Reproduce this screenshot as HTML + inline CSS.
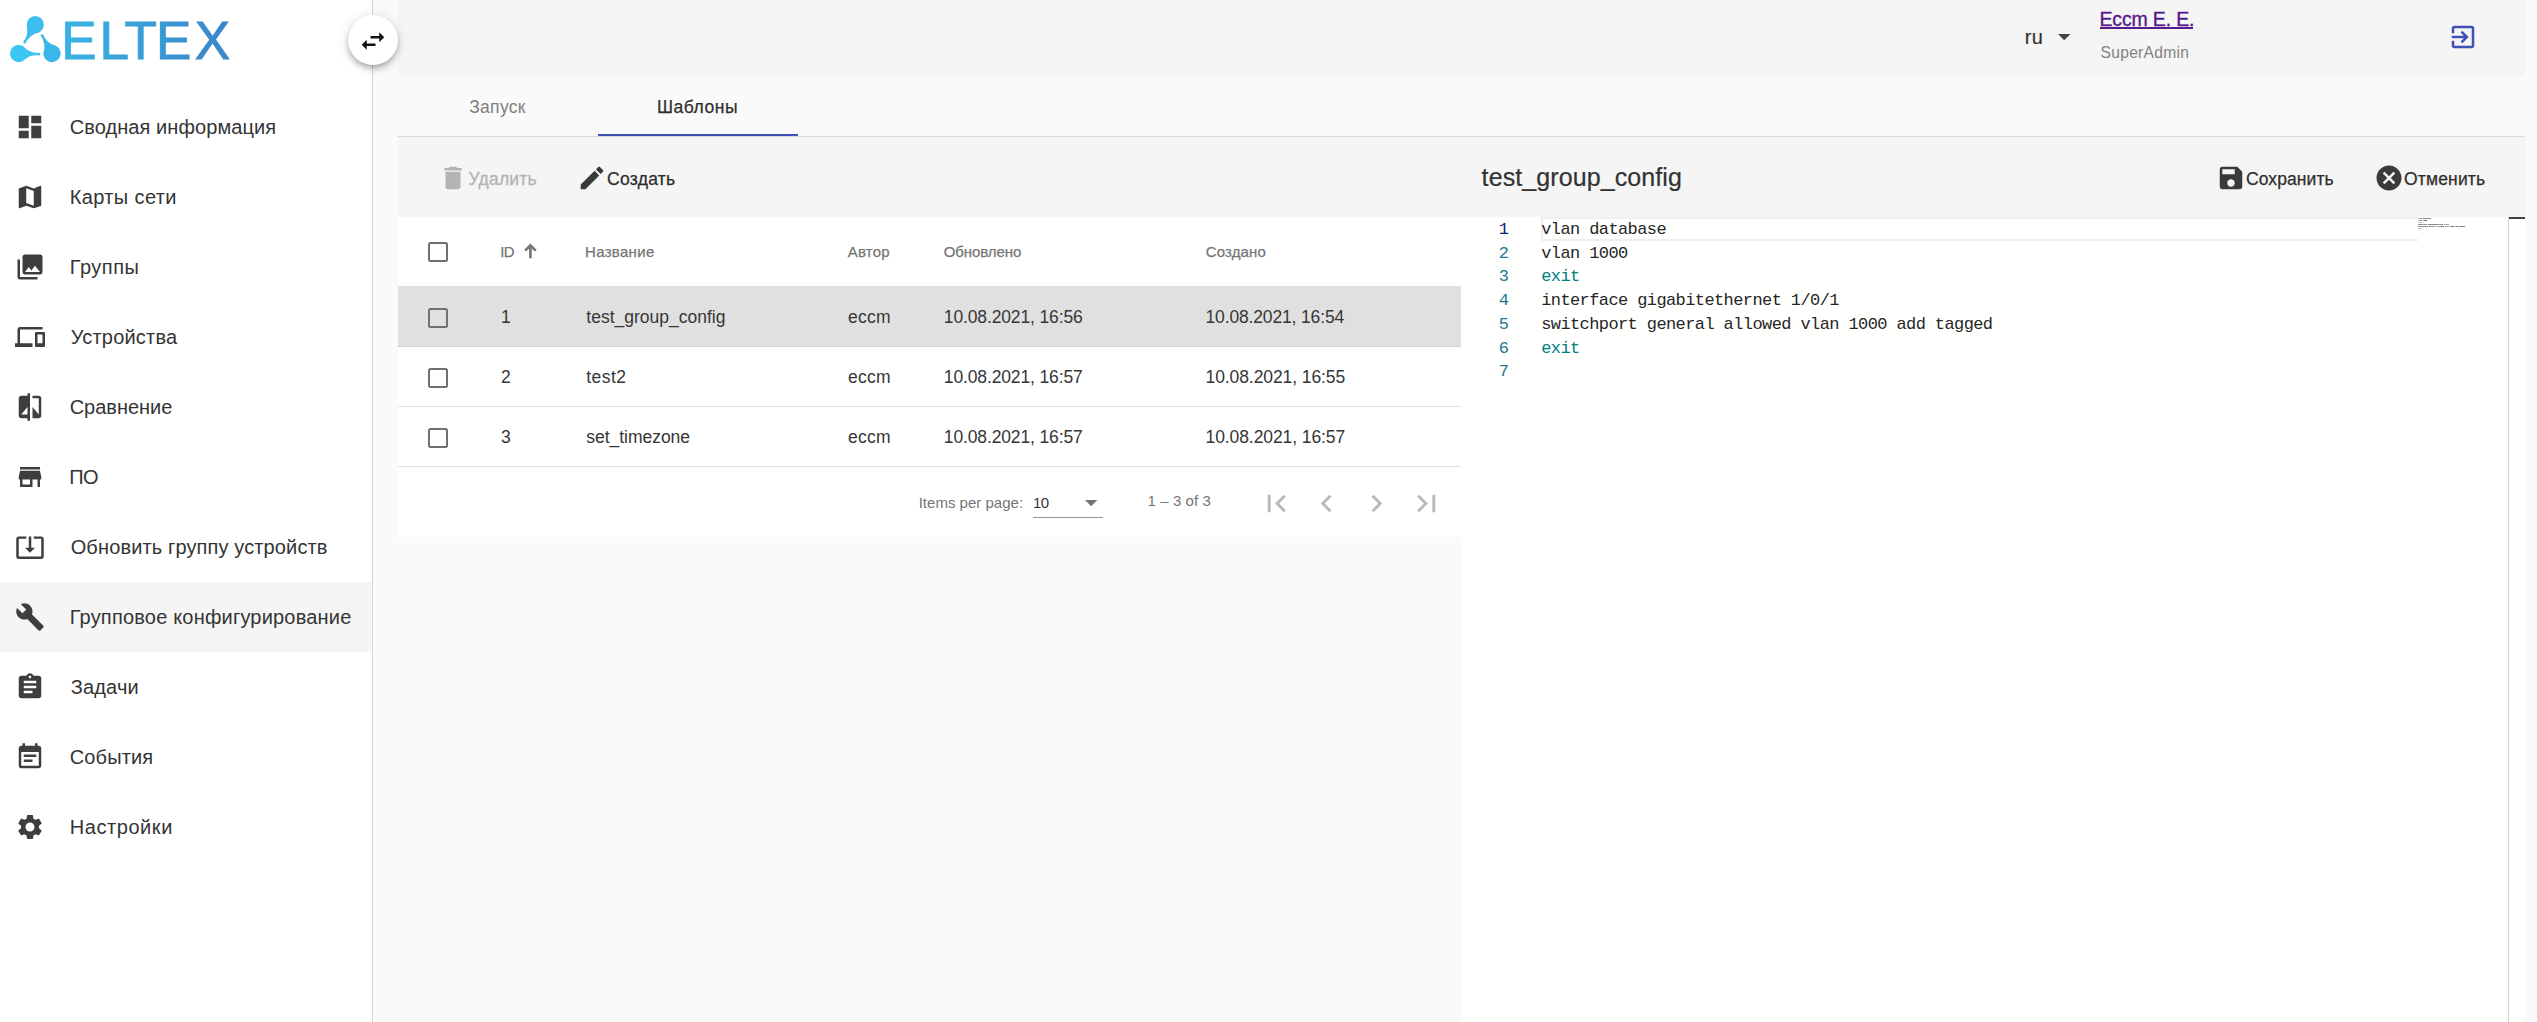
<!DOCTYPE html>
<html lang="ru">
<head>
<meta charset="utf-8">
<title>ECCM</title>
<style>
html,body{margin:0;padding:0}
body{width:2537px;height:1022px;overflow:hidden;background:#fafafa;position:relative;font-family:"Liberation Sans",sans-serif;color:#212121}
.b{position:absolute}
.t{position:absolute;margin:0;font-weight:400;white-space:nowrap;line-height:1;text-decoration:none}
.ic{position:absolute;display:block}
.cb{position:absolute;width:20px;height:20px;box-sizing:border-box;border:2.4px solid #707070;border-radius:2.5px}
.ln{position:absolute;left:1461px;width:48px;text-align:right;font:17px/1 "Liberation Mono",monospace;color:#237893;white-space:nowrap}
.cl{position:absolute;left:1541.2px;font:17px/1 "Liberation Mono",monospace;letter-spacing:-.6px;color:#262626;white-space:pre}
.mm{position:absolute;left:2418px;font:16px/14.57px "Liberation Mono",monospace;color:#000;white-space:pre;transform-origin:0 0;transform:scale(.1042,.14);-webkit-text-stroke:.3px currentColor}
</style>
</head>
<body>

<!-- ===== sidebar ===== -->
<nav>
<div class="b" style="left:0;top:0;width:372px;height:1022px;background:#fff"></div>
<div class="b" style="left:372px;top:0;width:1px;height:1022px;background:#d6d6d6"></div>
<div class="b" style="left:0;top:582px;width:372px;height:70px;background:#f5f5f5"></div>
<svg class="ic" style="left:0;top:0;width:260px;height:80px" viewBox="0 0 260 80">
<defs>
<linearGradient id="lg" gradientUnits="userSpaceOnUse" x1="8" y1="0" x2="232" y2="0"><stop offset="0" stop-color="#3cc6f2"/><stop offset="0.35" stop-color="#39addf"/><stop offset="1" stop-color="#3a84c8"/></linearGradient>
</defs>
<g transform="translate(35.3,43.9)" fill="#3bbeed"><circle cx="0" cy="-19.3" r="8.6"/><path d="M-8.3,-17 Q-6.6,-8.5 -12.3,-1.9 L-10.2,0 Q-6,-9.5 5,-12.2 Z"/></g>
<g transform="translate(35.3,43.9) rotate(120)" fill="#3ab6e8"><circle cx="0" cy="-19.3" r="8.6"/><path d="M-8.3,-17 Q-6.6,-8.5 -12.3,-1.9 L-10.2,0 Q-6,-9.5 5,-12.2 Z"/></g>
<g transform="translate(35.3,43.9) rotate(240)" fill="#3cc6f2"><circle cx="0" cy="-19.3" r="8.6"/><path d="M-8.3,-17 Q-6.6,-8.5 -12.3,-1.9 L-10.2,0 Q-6,-9.5 5,-12.2 Z"/></g>
<text x="61.2 99.4 124.4 156 194.8" y="58.8" font-family="Liberation Sans, sans-serif" font-size="53" fill="url(#lg)" stroke="url(#lg)" stroke-width="0.9">ELTEX</text>
</svg>
<svg class="ic" style="left:15px;top:112px;width:30px;height:30px;" viewBox="0 0 24 24"><path fill="#3e3e3e" d="M3 13h8V3H3v10zm0 8h8v-6H3v6zm10 0h8V11h-8v10zm0-18v6h8V3h-8z"/></svg><div class="t" style="left:69.70px;top:117.00px;font-size:20px;color:#343434;letter-spacing:0.084px;">Сводная информация</div>
<svg class="ic" style="left:15px;top:182px;width:30px;height:30px;" viewBox="0 0 24 24"><path fill="#3e3e3e" d="M20.5 3l-.16.03L15 5.1 9 3 3.36 4.9c-.21.07-.36.25-.36.48V20.5c0 .28.22.5.5.5l.16-.03L9 18.9l6 2.1 5.64-1.9c.21-.07.36-.25.36-.48V3.5c0-.28-.22-.5-.5-.5zM15 19l-6-2.11V5l6 2.11V19z"/></svg><div class="t" style="left:69.70px;top:187.00px;font-size:20px;color:#343434;letter-spacing:0.381px;">Карты сети</div>
<svg class="ic" style="left:15px;top:252px;width:30px;height:30px;" viewBox="0 0 24 24"><path fill="#3e3e3e" d="M22 16V4c0-1.1-.9-2-2-2H8c-1.1 0-2 .9-2 2v12c0 1.1.9 2 2 2h12c1.1 0 2-.9 2-2zm-11-4l2.03 2.71L16 11l4 5H8l3-4zM2 6v14c0 1.1.9 2 2 2h14v-2H4V6H2z"/></svg><div class="t" style="left:69.70px;top:257.00px;font-size:20px;color:#343434;letter-spacing:0.527px;">Группы</div>
<svg class="ic" style="left:15px;top:322px;width:30px;height:30px;" viewBox="0 0 24 24"><path fill="#3e3e3e" d="M4 6h18V4H4c-1.1 0-2 .9-2 2v11H0v3h14v-3H4V6zm19 2h-6c-.55 0-1 .45-1 1v10c0 .55.45 1 1 1h6c.55 0 1-.45 1-1V9c0-.55-.45-1-1-1zm-1 9h-4v-7h4v7z"/></svg><div class="t" style="left:70.70px;top:327.00px;font-size:20px;color:#343434;letter-spacing:0.199px;">Устройства</div>
<svg class="ic" style="left:15px;top:392px;width:30px;height:30px;" viewBox="0 0 24 24"><path fill="#3e3e3e" d="M10 3H5c-1.1 0-2 .9-2 2v14c0 1.1.9 2 2 2h5v2h2V1h-2v2zm0 15H5l5-6v6zm9-15h-5v2h5v13l-5-6v9h5c1.1 0 2-.9 2-2V5c0-1.1-.9-2-2-2z"/></svg><div class="t" style="left:69.70px;top:397.00px;font-size:20px;color:#343434;letter-spacing:-0.025px;">Сравнение</div>
<svg class="ic" style="left:15px;top:462px;width:30px;height:30px;" viewBox="0 0 24 24"><path fill="#3e3e3e" d="M20 4H4v2h16V4zm1 10v-2l-1-5H4l-1 5v2h1v6h10v-6h4v6h2v-6h1zm-9 4H6v-4h6v4z"/></svg><div class="t" style="left:69.21px;top:467.00px;font-size:20px;color:#343434;letter-spacing:-0.500px;">ПО</div>
<svg class="ic" style="left:15px;top:532px;width:30px;height:30px;" viewBox="0 0 24 24"><path fill="#3e3e3e" d="M12 16.5l4-4h-3v-9h-2v9H8l4 4zm9-13h-6v1.99h6v14.03H3V5.49h6V3.5H3c-1.1 0-2 .9-2 2v14c0 1.1.9 2 2 2h18c1.1 0 2-.9 2-2v-14c0-1.1-.9-2-2-2z"/></svg><div class="t" style="left:70.70px;top:537.00px;font-size:20px;color:#343434;letter-spacing:0.128px;">Обновить группу устройств</div>
<svg class="ic" style="left:15px;top:602px;width:30px;height:30px;" viewBox="0 0 24 24"><path fill="#3e3e3e" d="M22.7 19l-9.1-9.1c.9-2.3.4-5-1.5-6.9-2-2-5-2.4-7.4-1.3L9 6 6 9 1.6 4.7C.4 7.1.9 10.1 2.9 12.1c1.9 1.9 4.6 2.4 6.9 1.5l9.1 9.1c.4.4 1 .4 1.4 0l2.3-2.3c.5-.4.5-1.1.1-1.4z"/></svg><div class="t" style="left:69.70px;top:607.00px;font-size:20px;color:#343434;letter-spacing:0.191px;">Групповое конфигурирование</div>
<svg class="ic" style="left:15px;top:672px;width:30px;height:30px;" viewBox="0 0 24 24"><path fill="#3e3e3e" d="M19 3h-4.18C14.4 1.84 13.3 1 12 1c-1.3 0-2.4.84-2.82 2H5c-1.1 0-2 .9-2 2v14c0 1.1.9 2 2 2h14c1.1 0 2-.9 2-2V5c0-1.1-.9-2-2-2zm-7 0c.55 0 1 .45 1 1s-.45 1-1 1-1-.45-1-1 .45-1 1-1zm2 14H7v-2h7v2zm3-4H7v-2h10v2zm0-4H7V7h10v2z"/></svg><div class="t" style="left:70.70px;top:677.00px;font-size:20px;color:#343434;letter-spacing:0.165px;">Задачи</div>
<svg class="ic" style="left:15px;top:742px;width:30px;height:30px;" viewBox="0 0 24 24"><path fill="#3e3e3e" d="M17 10H7v2h10v-2zm2-7h-1V1h-2v2H8V1H6v2H5c-1.11 0-1.99.9-1.99 2L3 19c0 1.1.89 2 2 2h14c1.1 0 2-.9 2-2V5c0-1.1-.9-2-2-2zm0 16H5V8h14v11zm-5-5H7v2h7v-2z"/></svg><div class="t" style="left:69.70px;top:747.00px;font-size:20px;color:#343434;letter-spacing:0.145px;">События</div>
<svg class="ic" style="left:15px;top:812px;width:30px;height:30px;" viewBox="0 0 24 24"><path fill="#3e3e3e" d="M19.14 12.94c.04-.3.06-.61.06-.94 0-.32-.02-.64-.07-.94l2.03-1.58c.18-.14.23-.41.12-.61l-1.92-3.32c-.12-.22-.37-.29-.59-.22l-2.39.96c-.5-.38-1.03-.7-1.62-.94l-.36-2.54c-.04-.24-.24-.41-.48-.41h-3.84c-.24 0-.43.17-.47.41l-.36 2.54c-.59.24-1.13.57-1.62.94l-2.39-.96c-.22-.08-.47 0-.59.22L2.74 8.87c-.12.21-.08.47.12.61l2.03 1.58c-.05.3-.09.63-.09.94s.02.64.07.94l-2.03 1.58c-.18.14-.23.41-.12.61l1.92 3.32c.12.22.37.29.59.22l2.39-.96c.5.38 1.03.7 1.62.94l.36 2.54c.05.24.24.41.48.41h3.84c.24 0 .44-.17.47-.41l.36-2.54c.59-.24 1.13-.56 1.62-.94l2.39.96c.22.08.47 0 .59-.22l1.92-3.32c.12-.22.07-.47-.12-.61l-2.01-1.58zM12 15.6c-1.98 0-3.6-1.62-3.6-3.6s1.62-3.6 3.6-3.6 3.6 1.62 3.6 3.6-1.62 3.6-3.6 3.6z"/></svg><div class="t" style="left:69.70px;top:817.00px;font-size:20px;color:#343434;letter-spacing:0.576px;">Настройки</div>
</nav>

<!-- ===== top bar ===== -->
<header>
<div class="b" style="left:398px;top:0;width:2127px;height:76px;background:#f5f5f5"></div>
<svg class="ic" style="left:2058px;top:34px;width:12.4px;height:6.3px" viewBox="0 0 10 5"><path d="M0 0h10L5 5z" fill="#444"/></svg>
<div class="b" style="left:2100px;top:27px;width:93px;height:2px;background:#551a8b"></div>
<div class="t" style="left:2024.67px;top:26.70px;font-size:20px;color:#303030;letter-spacing:0.500px;-webkit-text-stroke:0.15px #303030;">ru</div>
<a class="t" style="left:2099.50px;top:9.70px;font-size:19.5px;color:#551a8b;letter-spacing:-0.168px;-webkit-text-stroke:0.35px #551a8b;">Eccm E. E.</a>
<div class="t" style="left:2100.50px;top:44.50px;font-size:15.6px;color:#828282;letter-spacing:0.296px;">SuperAdmin</div>
<svg class="ic" style="left:2448.0px;top:22px;width:30px;height:30px;" viewBox="0 0 24 24"><path fill="#3f51b5" d="M10.09 15.59L11.5 17l5-5-5-5-1.41 1.41L12.67 11H3v2h9.67l-2.58 2.59zM19 3H5c-1.11 0-2 .9-2 2v4h2V5h14v14H5v-4H3v4c0 1.1.89 2 2 2h14c1.1 0 2-.9 2-2V5c0-1.1-.9-2-2-2z"/></svg>
</header>

<main>
<!-- ===== tabs ===== -->
<div class="b" style="left:398px;top:136px;width:2127px;height:1px;background:#d8d8d8"></div>
<div class="b" style="left:598px;top:134px;width:200px;height:2px;background:#3f51b5"></div>
<div class="t" style="left:469.20px;top:98.70px;font-size:17.5px;color:#808080;letter-spacing:0.303px;">Запуск</div>
<div class="t" style="left:656.90px;top:98.70px;font-size:17.5px;color:#2e2e2e;letter-spacing:0.548px;-webkit-text-stroke:0.25px #2e2e2e;">Шаблоны</div>

<!-- ===== toolbar ===== -->
<div class="b" style="left:398px;top:137px;width:2127px;height:80px;background:#f5f5f5"></div>
<svg class="ic" style="left:437.5px;top:162.6px;width:30px;height:30px;" viewBox="0 0 24 24"><path fill="#b4b4b4" d="M6 19c0 1.1.9 2 2 2h8c1.1 0 2-.9 2-2V7H6v12zM19 4h-3.5l-1-1h-5l-1 1H5v2h14V4z"/></svg><div class="t" style="left:468.50px;top:171.00px;font-size:17.5px;color:#b4b4b4;letter-spacing:0.234px;-webkit-text-stroke:0.3px #b4b4b4;">Удалить</div>
<svg class="ic" style="left:577.1px;top:162.6px;width:30px;height:30px;" viewBox="0 0 24 24"><path fill="#3a3a3a" d="M3 17.25V21h3.75L17.81 9.94l-3.75-3.75L3 17.25zM20.71 7.04c.39-.39.39-1.02 0-1.41l-2.34-2.34c-.39-.39-1.02-.39-1.41 0l-1.83 1.83 3.75 3.75 1.83-1.83z"/></svg><div class="t" style="left:607.00px;top:171.00px;font-size:17.5px;color:#2e2e2e;letter-spacing:0.285px;-webkit-text-stroke:0.25px #2e2e2e;">Создать</div>
<h2 class="t" style="left:1481.60px;top:164.50px;font-size:25px;color:#333333;letter-spacing:0.091px;-webkit-text-stroke:0.22px #333333;">test_group_config</h2>
<svg class="ic" style="left:2215.9px;top:163.1px;width:30px;height:30px;" viewBox="0 0 24 24"><path fill="#3a3a3a" d="M17 3H5c-1.11 0-2 .9-2 2v14c0 1.1.89 2 2 2h14c1.1 0 2-.9 2-2V7l-4-4zm-5 16c-1.66 0-3-1.34-3-3s1.34-3 3-3 3 1.34 3 3-1.34 3-3 3zm3-10H5V5h10v4z"/></svg><div class="t" style="left:2246.00px;top:171.00px;font-size:17.5px;color:#2e2e2e;letter-spacing:0.094px;-webkit-text-stroke:0.25px #2e2e2e;">Сохранить</div>
<svg class="ic" style="left:2373.8px;top:163.1px;width:30px;height:30px;" viewBox="0 0 24 24"><path fill="#3a3a3a" d="M12 2C6.47 2 2 6.47 2 12s4.47 10 10 10 10-4.47 10-10S17.53 2 12 2zm5 13.59L15.59 17 12 13.41 8.41 17 7 15.59 10.59 12 7 8.41 8.41 7 12 10.59 15.59 7 17 8.41 13.41 12 17 15.59z"/></svg><div class="t" style="left:2404.10px;top:171.00px;font-size:17.5px;color:#2e2e2e;letter-spacing:0.151px;-webkit-text-stroke:0.25px #2e2e2e;">Отменить</div>

<!-- ===== templates table ===== -->
<section>
<div class="b" style="left:398px;top:217px;width:1063px;height:320px;background:#fff"></div>
<div class="b" style="left:398px;top:286px;width:1063px;height:60px;background:#e0e0e0"></div>
<div class="b" style="left:398px;top:346px;width:1063px;height:1px;background:#cfcfcf"></div>
<div class="b" style="left:398px;top:406px;width:1063px;height:1px;background:#e0e0e0"></div>
<div class="b" style="left:398px;top:466px;width:1063px;height:1px;background:#e0e0e0"></div>
<div class="cb" style="left:428px;top:242px"></div>
<div class="cb" style="left:428px;top:308px"></div>
<div class="cb" style="left:428px;top:368px"></div>
<div class="cb" style="left:428px;top:428px"></div>
<svg class="ic" style="left:522px;top:242px;width:17px;height:18px" viewBox="0 0 17 18"><path d="M8.4 16.2V3.4M3.1 8.6L8.4 3.3l5.3 5.3" fill="none" stroke="#757575" stroke-width="2.6" stroke-linejoin="miter"/></svg>
<div class="t" style="left:500.17px;top:243.80px;font-size:15px;color:#757575;letter-spacing:-0.500px;-webkit-text-stroke:0.25px #757575;">ID</div>
<div class="t" style="left:585.00px;top:243.80px;font-size:15px;color:#757575;letter-spacing:0.316px;-webkit-text-stroke:0.25px #757575;">Название</div>
<div class="t" style="left:847.80px;top:243.80px;font-size:15px;color:#757575;letter-spacing:0.203px;-webkit-text-stroke:0.25px #757575;">Автор</div>
<div class="t" style="left:943.70px;top:243.80px;font-size:15px;color:#757575;letter-spacing:-0.073px;-webkit-text-stroke:0.25px #757575;">Обновлено</div>
<div class="t" style="left:1205.70px;top:243.80px;font-size:15px;color:#757575;letter-spacing:0.128px;-webkit-text-stroke:0.25px #757575;">Создано</div>
<div class="t" style="left:501.00px;top:309.00px;font-size:17.5px;color:#363636;">1</div>
<div class="t" style="left:586.30px;top:309.00px;font-size:17.5px;color:#363636;">test_group_config</div>
<div class="t" style="left:848.00px;top:309.00px;font-size:17.5px;color:#363636;letter-spacing:0.256px;">eccm</div>
<div class="t" style="left:943.80px;top:309.00px;font-size:17.5px;color:#363636;letter-spacing:-0.136px;">10.08.2021, 16:56</div>
<div class="t" style="left:1205.50px;top:309.00px;font-size:17.5px;color:#363636;letter-spacing:-0.148px;">10.08.2021, 16:54</div>
<div class="t" style="left:501.00px;top:369.00px;font-size:17.5px;color:#363636;">2</div>
<div class="t" style="left:586.30px;top:369.00px;font-size:17.5px;color:#363636;letter-spacing:0.423px;">test2</div>
<div class="t" style="left:848.00px;top:369.00px;font-size:17.5px;color:#363636;letter-spacing:0.256px;">eccm</div>
<div class="t" style="left:943.80px;top:369.00px;font-size:17.5px;color:#363636;letter-spacing:-0.136px;">10.08.2021, 16:57</div>
<div class="t" style="left:1205.50px;top:369.00px;font-size:17.5px;color:#363636;letter-spacing:-0.086px;">10.08.2021, 16:55</div>
<div class="t" style="left:501.00px;top:429.00px;font-size:17.5px;color:#363636;">3</div>
<div class="t" style="left:586.30px;top:429.00px;font-size:17.5px;color:#363636;letter-spacing:-0.032px;">set_timezone</div>
<div class="t" style="left:848.00px;top:429.00px;font-size:17.5px;color:#363636;letter-spacing:0.256px;">eccm</div>
<div class="t" style="left:943.80px;top:429.00px;font-size:17.5px;color:#363636;letter-spacing:-0.136px;">10.08.2021, 16:57</div>
<div class="t" style="left:1205.50px;top:429.00px;font-size:17.5px;color:#363636;letter-spacing:-0.086px;">10.08.2021, 16:57</div>
<!-- paginator -->
<div class="b" style="left:1033px;top:517px;width:70px;height:1px;background:#949494"></div>
<svg class="ic" style="left:1085.3px;top:500.2px;width:12.4px;height:6.4px" viewBox="0 0 10 5"><path d="M0 0h10L5 5z" fill="#757575"/></svg>
<div class="t" style="left:918.70px;top:494.70px;font-size:15px;color:#757575;letter-spacing:0.010px;">Items per page:</div>
<div class="t" style="left:1032.98px;top:495.00px;font-size:15px;color:#333333;letter-spacing:-0.500px;">10</div>
<div class="t" style="left:1147.60px;top:493.40px;font-size:15px;color:#757575;letter-spacing:0.066px;">1 – 3 of 3</div>
<svg class="ic" style="left:1259px;top:486px;width:35px;height:35px;" viewBox="0 0 24 24"><path fill="#b9b9b9" d="M18.41 16.59L13.82 12l4.59-4.59L17 6l-6 6 6 6zM6 6h2v12H6z"/></svg>
<svg class="ic" style="left:1309.2px;top:486px;width:35px;height:35px;" viewBox="0 0 24 24"><path fill="#b9b9b9" d="M15.41 7.41L14 6l-6 6 6 6 1.41-1.41L10.83 12z"/></svg>
<svg class="ic" style="left:1359.2px;top:486px;width:35px;height:35px;" viewBox="0 0 24 24"><path fill="#b9b9b9" d="M10 6L8.59 7.41 13.17 12l-4.58 4.59L10 18l6-6z"/></svg>
<svg class="ic" style="left:1409px;top:486px;width:35px;height:35px;" viewBox="0 0 24 24"><path fill="#b9b9b9" d="M5.59 7.41L10.18 12l-4.59 4.59L7 18l6-6-6-6zM16 6h2v12h-2z"/></svg>
</section>

<!-- ===== code editor ===== -->
<section>
<div class="b" style="left:1461px;top:217px;width:1064px;height:805px;background:#fffffe"></div>
<div class="b" style="left:1541px;top:217px;width:877px;height:24px;box-sizing:border-box;border:2px solid #eee;border-right:0"></div>
<div class="b" style="left:2508px;top:217px;width:1px;height:805px;background:#d4d4d4"></div>
<div class="b" style="left:2509px;top:217px;width:16px;height:2px;background:#424242"></div>
<div class="ln" style="top:220.80px;color:#0b216f">1</div><div class="cl" style="top:220.80px;">vlan database</div>
<div class="ln" style="top:244.55px;color:#237893">2</div><div class="cl" style="top:244.55px;">vlan 1000</div>
<div class="ln" style="top:268.30px;color:#237893">3</div><div class="cl" style="top:268.30px;color:#008080;">exit</div>
<div class="ln" style="top:292.05px;color:#237893">4</div><div class="cl" style="top:292.05px;">interface gigabitethernet 1/0/1</div>
<div class="ln" style="top:315.80px;color:#237893">5</div><div class="cl" style="top:315.80px;">switchport general allowed vlan 1000 add tagged</div>
<div class="ln" style="top:339.55px;color:#237893">6</div><div class="cl" style="top:339.55px;color:#008080;">exit</div>
<div class="ln" style="top:363.30px;color:#237893">7</div>
<div class="mm" style="top:217.3px">vlan database
vlan 1000
<span style="color:#1f8f8f">exit</span>
interface gigabitethernet 1/0/1
switchport general allowed vlan 1000 add tagged
<span style="color:#1f8f8f">exit</span>
</div>
</section>
</main>

<!-- ===== sidebar toggle (floating button) ===== -->
<div class="b" style="left:348px;top:15px;width:50px;height:50px;border-radius:50%;background:#fff;box-shadow:0 2.5px 5px -1.25px rgba(0,0,0,.2),0 5px 6.25px 0 rgba(0,0,0,.14),0 1.25px 12.5px 0 rgba(0,0,0,.12)"></div>
<svg class="ic" style="left:357.5px;top:26.4px;width:30px;height:30px;" viewBox="0 0 24 24"><path fill="#111" d="M6.99 11L3 15l3.99 4v-3H14v-2H6.99v-3zM21 9l-3.99-4v3H10v2h7.01v3L21 9z"/></svg>
</body>
</html>
